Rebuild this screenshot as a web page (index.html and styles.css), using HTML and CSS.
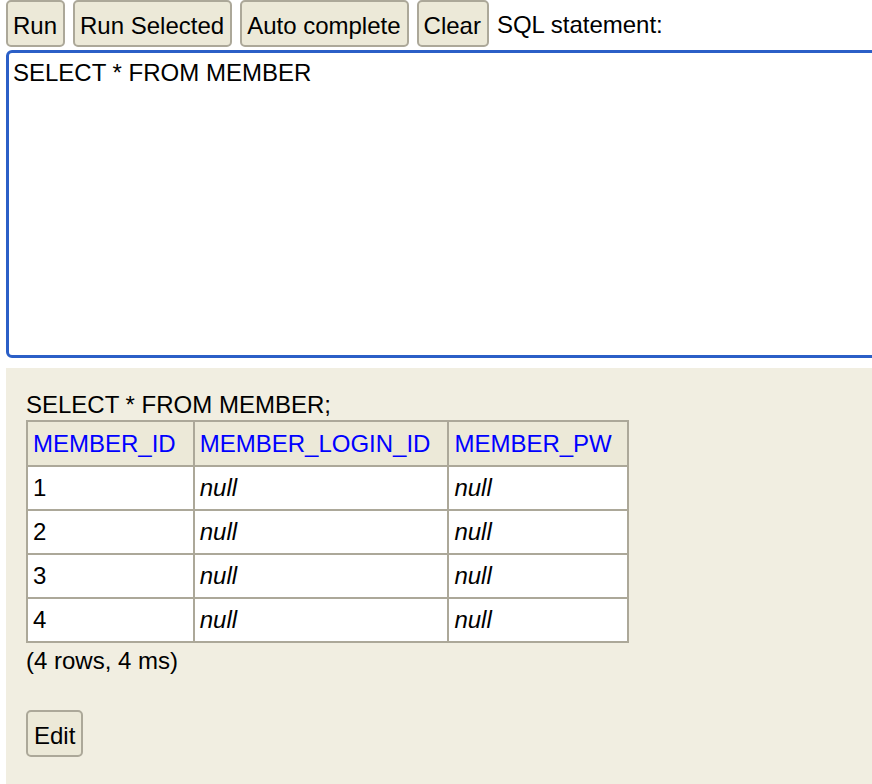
FILE: index.html
```html
<!DOCTYPE html>
<html>
<head>
<meta charset="utf-8">
<link rel="stylesheet" href="styles.css">
</head>
<body>
<div class="toolbar">
  <button class="btn">Run</button>
  <button class="btn">Run Selected</button>
  <button class="btn">Auto complete</button>
  <button class="btn">Clear</button>
  <span class="label">SQL statement:</span>
</div>
<div class="editor">SELECT * FROM MEMBER</div>
<div class="result">
  <div class="stmt">SELECT * FROM MEMBER;</div>
  <table class="grid">
    <tr><th>MEMBER_ID</th><th>MEMBER_LOGIN_ID</th><th>MEMBER_PW</th></tr>
    <tr><td>1</td><td class="null">null</td><td class="null">null</td></tr>
    <tr><td>2</td><td class="null">null</td><td class="null">null</td></tr>
    <tr><td>3</td><td class="null">null</td><td class="null">null</td></tr>
    <tr><td>4</td><td class="null">null</td><td class="null">null</td></tr>
  </table>
  <div class="stats">(4 rows, 4 ms)</div>
  <button class="btn edit">Edit</button>
</div>
</body>
</html>
```
FILE: styles.css
```css
html, body {
  margin: 0;
  padding: 0;
  background: #fff;
  overflow: hidden;
  width: 872px;
  height: 784px;
}
body {
  font-family: "Liberation Sans", Arial, sans-serif;
  font-size: 24px;
  line-height: 27px;
  color: #000;
}
.toolbar {
  display: flex;
  align-items: flex-start;
  gap: 8px;
  padding-left: 6px;
  height: 47px;
}
.btn {
  font-family: "Liberation Sans", Arial, sans-serif;
  font-size: 24px;
  line-height: 27px;
  height: 47px;
  padding: 3px 6px 0 5px;
  margin: 0;
  background: #ece9d8;
  border: 2px solid #aca899;
  border-radius: 5px;
  color: #000;
  box-sizing: border-box;
}
.label {
  margin-left: 0;
  padding-top: 11px;
}
.editor {
  margin: 3px 0 0 6px;
  width: 900px;
  border: 3px solid #2b5fc7;
  border-radius: 6px;
  padding: 6px 4px;
  box-sizing: border-box;
  height: 308px;
  background: #fff;
}
.result {
  margin: 10px 0 0 6px;
  width: 900px;
  height: 420px;
  background: #f1eee1;
  padding: 23px 20px 0 20px;
  box-sizing: border-box;
}
.grid {
  border-collapse: collapse;
  margin-top: 2px;
}
.grid th, .grid td {
  border: 2px solid #aca899;
  padding: 7px 17px 8px 5px;
  text-align: left;
  font-weight: normal;
  white-space: nowrap;
}
.grid th:last-child, .grid td:last-child {
  padding-right: 15px;
}
.grid th {
  background: #ece9d8;
  color: #0000ff;
  padding-top: 8px;
}
.grid td {
  background: #fff;
}
.grid td.null {
  font-style: italic;
}
.stats {
  margin-top: 4px;
}
.edit {
  display: block;
  margin-top: 36px;
  padding: 3px 6px 0 6px;
}
```
